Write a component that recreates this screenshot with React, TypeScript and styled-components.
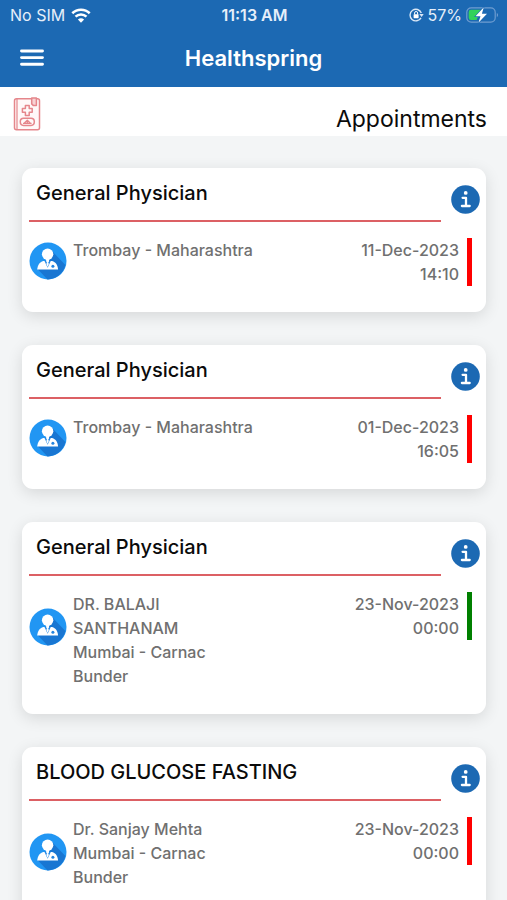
import React from "react";
import styled, { createGlobalStyle } from "styled-components";

const GlobalStyle = createGlobalStyle`
  *, *::before, *::after { box-sizing: border-box; }
  body {
    margin: 0;
    background: #f3f5f6;
    color: #0b0b0b;
    font-family: Inter, "Liberation Sans", sans-serif;
  }
  button { padding: 0; border: 0; background: none; color: inherit; cursor: pointer; font: inherit; }
  svg { display: block; }
`;

const Page = styled.div`
  height: 100vh;
  overflow: hidden;
  display: flex;
  flex-direction: column;
`;

const TopBar = styled.header`
  background: #1c69b3;
  color: #fff;
`;

const StatusBar = styled.div`
  display: grid;
  grid-template-columns: 1fr auto 1fr;
  align-items: center;
  height: 30px;
  padding: 0 8px 0 10px;
  font-size: 16px;
  line-height: 20px;
  color: #e6effa;
`;

const StatusGroup = styled.div<{ $end?: boolean }>`
  display: flex;
  align-items: center;
  justify-content: ${(p) => (p.$end ? "flex-end" : "flex-start")};
  gap: ${(p) => (p.$end ? 4 : 6)}px;
`;

const Clock = styled.time`
  font-weight: 600;
  font-size: 16px;
`;

const NavBar = styled.div`
  display: grid;
  grid-template-columns: 24px 1fr 24px;
  align-items: center;
  height: 57px;
  padding: 0 20px 2px;
`;

const AppName = styled.h1`
  margin: 0;
  text-align: center;
  font-size: 22px;
  line-height: 28px;
  font-weight: 600;
`;

const SubHeader = styled.div`
  display: flex;
  justify-content: space-between;
  height: 49px;
  padding: 10px 20px 0 13px;
  background: #fff;
`;

const PageTitle = styled.h2`
  margin: 0;
  padding-top: 6px;
  font-size: 23px;
  line-height: 32px;
  font-weight: 400;
`;

const List = styled.main`
  flex: 1;
  min-height: 0;
  overflow: auto;
  scrollbar-width: none;
  display: flex;
  flex-direction: column;
  gap: 33px;
  padding: 32px 21px 32px 22px;
`;

const Card = styled.article`
  flex: none;
  padding: 0 6px 26px 7px;
  border-radius: 11px;
  background: #fff;
  box-shadow: 0 4px 16px rgba(0, 0, 0, 0.12);
`;

const CardHead = styled.div`
  display: grid;
  grid-template-columns: 1fr 29px;
  gap: 10px;
`;

const CardTitle = styled.h3`
  margin: 0;
  padding: 12px 7px 13px;
  border-bottom: 2px solid #dc6064;
  font-size: 20px;
  line-height: 27px;
  font-weight: 500;
`;

const InfoButton = styled.button`
  align-self: end;
  margin-bottom: 8px;
`;

const CardBody = styled.div`
  display: grid;
  grid-template-columns: 38px 1fr auto 5px;
  align-items: start;
  padding: 16px 8px 0 0;
  color: #707070;
  font-size: 16px;
  line-height: 24px;
  font-weight: 500;
`;

const Avatar = styled.div<{ $lowered: boolean }>`
  margin-top: ${(p) => (p.$lowered ? 16 : 4)}px;
`;

const Place = styled.div`
  max-width: 190px;
  padding-left: 6px;
`;

const Line = styled.div<{ $narrow?: boolean }>`
  max-width: ${(p) => (p.$narrow ? "150px" : "none")};
`;

const When = styled.time`
  padding-right: 8px;
  text-align: right;
  white-space: nowrap;
`;

const StatusMark = styled.span<{ $done: boolean }>`
  height: 48px;
  background: ${(p) => (p.$done ? "#008000" : "#ff0000")};
`;

const WifiIcon = () => (
  <svg width="20" height="15" viewBox="0 0 20 15" fill="none" aria-label="Wi-Fi">
    <path d="M1.3 5.2a12.6 12.6 0 0 1 17.4 0" stroke="#fff" strokeWidth="2.6" />
    <path d="M4.5 8.7a7.9 7.9 0 0 1 11 0" stroke="#fff" strokeWidth="2.5" />
    <path d="M10 14.8 6.9 11.6a4.5 4.5 0 0 1 6.2 0Z" fill="#fff" />
  </svg>
);

const RotationLockIcon = () => (
  <svg width="15" height="14" viewBox="0 0 15 14" fill="none" aria-label="Rotation lock">
    <path d="M12 9.8A5.8 5.8 0 1 1 12.3 5" stroke="#dbe8f6" strokeWidth="1.4" />
    <path d="M10.3 5.9h4.4l-2.1 3Z" fill="#dbe8f6" />
    <rect x="4.6" y="6.2" width="5" height="4" rx=".6" fill="#fff" />
    <path d="M5.6 6.4V5a1.5 1.5 0 0 1 3 0v1.4" stroke="#fff" strokeWidth="1" />
  </svg>
);

const BatteryIcon = () => (
  <svg width="33" height="18" viewBox="0 0 33 18" fill="none" aria-label="Battery charging">
    <rect x=".8" y="1.8" width="28.4" height="14.4" rx="4.4" stroke="#6f9dd1" strokeWidth="1.2" />
    <path d="M30.8 7v4.2c1.7-.7 1.7-3.5 0-4.2Z" fill="#6f9dd1" />
    <path d="M5 3.8h10L10.6 14H5a2.3 2.3 0 0 1-2.3-2.3V6A2.3 2.3 0 0 1 5 3.8Z" fill="#32d25b" />
    <path d="m17.8 1.2-8.3 9.1h5l-2.1 6.5 8.6-9.1h-5.1Z" fill="#fff" stroke="#1c69b3" strokeWidth="1.2" paintOrder="stroke" />
  </svg>
);

const MenuIcon = () => (
  <svg width="24" height="18" viewBox="0 0 24 18" fill="none" stroke="#fff" strokeWidth="2.9" strokeLinecap="round">
    <path d="M1.5 2h21M1.5 8.6h21M1.5 15.2h21" />
  </svg>
);

const InfoIcon = () => (
  <svg width="29" height="29" viewBox="0 0 29 29" fill="none" aria-hidden="true">
    <circle cx="14.5" cy="14.5" r="14.3" fill="#1c69b3" />
    <circle cx="14.7" cy="7.9" r="1.9" fill="#fff" />
    <path d="M11.6 12.8h3.4v8M10.9 21h7.8" stroke="#fff" strokeWidth="2.3" strokeLinecap="round" strokeLinejoin="round" />
  </svg>
);

const RecordIcon = () => (
  <svg width="28" height="34" viewBox="0 0 28 34" fill="none" stroke="#e5868b" strokeWidth="1.5" strokeLinejoin="round" aria-hidden="true">
    <rect x="1.5" y="1.7" width="25" height="31" rx="2" fill="#fff8f8" />
    <path d="M4 2v30.5" strokeWidth="1.2" />
    <path d="M18.7.9h4.7v7.5h-3.2l-1.5-1.5Z" fill="#f8d2d4" />
    <path d="M12.4 8.4h3.8v3.1h3v3.8h-3v3.2h-3.8v-3.2h-3v-3.8h3Z" />
    <rect x="7.3" y="21.2" width="14" height="7.2" rx="3.3" />
    <path d="M10 26.4h8.6M11.4 26l2.9-2.7 2.9 2.7M14.3 24v2.2" strokeWidth="1.3" />
  </svg>
);

const DoctorIcon = () => (
  <svg width="38" height="38" viewBox="0 0 38 38" aria-hidden="true">
    <circle cx="19" cy="19" r="18.5" fill="#2196f3" />
    <path d="m22.5 8.5 13.9 14.6A18.5 18.5 0 0 1 18.5 37.4L9 27.6l8-6Z" fill="#1976d2" />
    <path d="M8.2 27.6c.4-4.2 2.3-7.6 6.1-8.6h8.8c3.8 1 5.6 4.4 6 8.6Z" fill="#fff" />
    <path d="m15.4 18.8 3.2 7 3.3-7Z" fill="#2186e4" />
    <path d="m18.6 19 1.3 2.9-1.3 3.2-1.3-3.2Z" fill="#fff" />
    <circle cx="18.6" cy="12.3" r="5.7" fill="#fff" />
    <path d="M16.9 16.8h3.4l-.5 3.4h-2.4Z" fill="#fff" />
    <circle cx="23.9" cy="24.3" r="1.5" fill="#2384df" />
  </svg>
);

interface Appointment {
  title: string;
  doctor?: string;
  place: string;
  date: string;
  time: string;
  done: boolean;
}

const appointments: Appointment[] = [
  { title: "General Physician", place: "Trombay - Maharashtra", date: "11-Dec-2023", time: "14:10", done: false },
  { title: "General Physician", place: "Trombay - Maharashtra", date: "01-Dec-2023", time: "16:05", done: false },
  { title: "General Physician", doctor: "DR. BALAJI SANTHANAM", place: "Mumbai - Carnac Bunder", date: "23-Nov-2023", time: "00:00", done: true },
  { title: "BLOOD GLUCOSE FASTING", doctor: "Dr. Sanjay Mehta", place: "Mumbai - Carnac Bunder", date: "23-Nov-2023", time: "00:00", done: false },
];

const AppointmentCard = ({ title, doctor, place, date, time, done }: Appointment) => (
  <Card>
    <CardHead>
      <CardTitle>{title}</CardTitle>
      <InfoButton aria-label={`Details for ${title}, ${date}`}>
        <InfoIcon />
      </InfoButton>
    </CardHead>
    <CardBody>
      <Avatar $lowered={Boolean(doctor)}>
        <DoctorIcon />
      </Avatar>
      <Place>
        {doctor && <Line $narrow>{doctor}</Line>}
        <Line $narrow={Boolean(doctor)}>{place}</Line>
      </Place>
      <When>
        {date}
        <br />
        {time}
      </When>
      <StatusMark $done={done} />
    </CardBody>
  </Card>
);

export default function App() {
  return (
    <>
      <GlobalStyle />
      <Page>
        <TopBar>
          <StatusBar>
            <StatusGroup>
              <span>No SIM</span>
              <WifiIcon />
            </StatusGroup>
            <Clock>11:13 AM</Clock>
            <StatusGroup $end>
              <RotationLockIcon />
              <span>57%</span>
              <BatteryIcon />
            </StatusGroup>
          </StatusBar>
          <NavBar>
            <button aria-label="Open menu">
              <MenuIcon />
            </button>
            <AppName>Healthspring</AppName>
          </NavBar>
        </TopBar>
        <SubHeader>
          <RecordIcon />
          <PageTitle>Appointments</PageTitle>
        </SubHeader>
        <List>
          {appointments.map((item) => (
            <AppointmentCard key={`${item.date}-${item.title}`} {...item} />
          ))}
        </List>
      </Page>
    </>
  );
}
